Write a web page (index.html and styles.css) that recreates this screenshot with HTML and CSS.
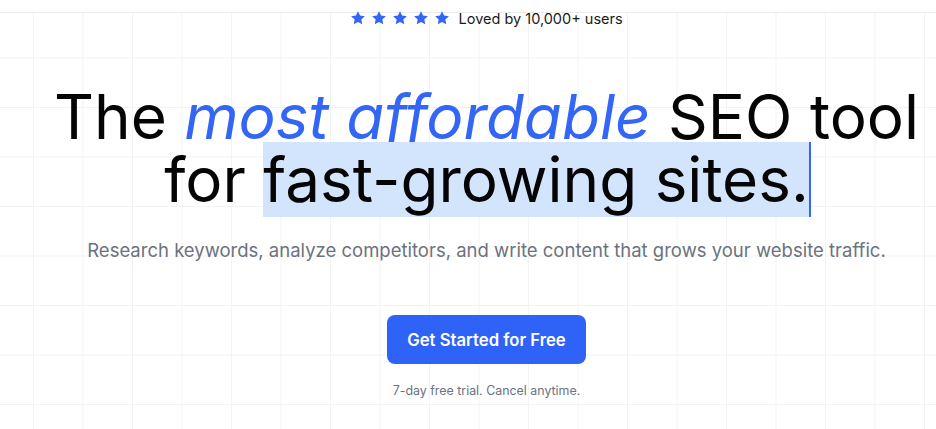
FILE: index.html
```html
<!DOCTYPE html>
<html lang="en">
<head>
<meta charset="utf-8">
<title>SEO tool</title>
<link rel="stylesheet" href="styles.css">
</head>
<body>
<div class="page">
  <div class="topline"></div>
  <section class="hero">
    <div class="rating">
      <div class="stars">
        <svg viewBox="0 0 24 24"><path d="M12 1.8l3.1 6.6 7.2.9-5.3 5 1.4 7.1L12 17.9l-6.4 3.5L7 14.3l-5.3-5 7.2-.9z"/></svg>
        <svg viewBox="0 0 24 24"><path d="M12 1.8l3.1 6.6 7.2.9-5.3 5 1.4 7.1L12 17.9l-6.4 3.5L7 14.3l-5.3-5 7.2-.9z"/></svg>
        <svg viewBox="0 0 24 24"><path d="M12 1.8l3.1 6.6 7.2.9-5.3 5 1.4 7.1L12 17.9l-6.4 3.5L7 14.3l-5.3-5 7.2-.9z"/></svg>
        <svg viewBox="0 0 24 24"><path d="M12 1.8l3.1 6.6 7.2.9-5.3 5 1.4 7.1L12 17.9l-6.4 3.5L7 14.3l-5.3-5 7.2-.9z"/></svg>
        <svg viewBox="0 0 24 24"><path d="M12 1.8l3.1 6.6 7.2.9-5.3 5 1.4 7.1L12 17.9l-6.4 3.5L7 14.3l-5.3-5 7.2-.9z"/></svg>
      </div>
      <span class="rating-text">Loved by 10,000+ users</span>
    </div>
    <h1 class="headline">
      <span class="line">The <em class="accent">most affordable</em> SEO tool</span>
      <span class="line">for <span class="sel">fast-growing sites.<span class="caret"></span></span></span>
    </h1>
    <p class="subtitle">Research keywords, analyze competitors, and write content that grows your website traffic.</p>
    <a class="cta" href="#">Get Started for Free</a>
    <p class="note">7-day free trial. Cancel anytime.</p>
  </section>
</div>
</body>
</html>
```
FILE: styles.css
```css
html, body {
  margin: 0;
  padding: 0;
  background: #fff;
  overflow: hidden;
}
body {
  font-family: Inter, "Noto Sans", sans-serif;
  color: #0a0a0a;
}
.page {
  width: 973px;
  height: 429px;
  background-color: #fff;
  background-image:
    linear-gradient(to right, #f3f3f3 1px, transparent 1px),
    linear-gradient(to bottom, #f3f3f3 1px, transparent 1px);
  background-size: 49.5px 49.5px;
  background-position: 33px 8px;
}
.topline {
  height: 12px;
  border-bottom: 1px solid #ececec;
  background: #fff;
}
.hero {
  display: flex;
  flex-direction: column;
  align-items: center;
  text-align: center;
}
.rating {
  display: flex;
  align-items: center;
  gap: 9px;
  margin-top: -1px;
  height: 12px;
}
.stars {
  display: flex;
  gap: 4.8px;
}
.stars svg {
  width: 16px;
  height: 16px;
  fill: #3466f6;
}
.rating-text {
  font-size: 14.5px;
  color: #1a1a1a;
}
.headline {
  margin: 61px 0 0;
  font-weight: 400;
  font-size: 62px;
  line-height: 63px;
  letter-spacing: 0;
  color: #050505;
}
.line {
  display: block;
}
.accent {
  color: #3466f6;
  font-style: italic;
}
.sel {
  position: relative;
  background: #d3e5fc;
}
.caret {
  position: absolute;
  right: -2px;
  top: 0;
  bottom: 0;
  width: 2px;
  background: #3466f6;
}
.subtitle {
  margin: 25px 0 0;
  font-size: 18.5px;
  line-height: 28px;
  color: #6b7280;
}
.cta {
  margin-top: 51px;
  width: 199px;
  height: 49px;
  display: flex;
  align-items: center;
  justify-content: center;
  background: #2f62f6;
  border-radius: 8px;
  color: #fff;
  font-weight: 600;
  font-size: 16.7px;
  text-decoration: none;
}
.note {
  margin: 19px 0 0;
  font-size: 12.4px;
  color: #6b7280;
}
```
